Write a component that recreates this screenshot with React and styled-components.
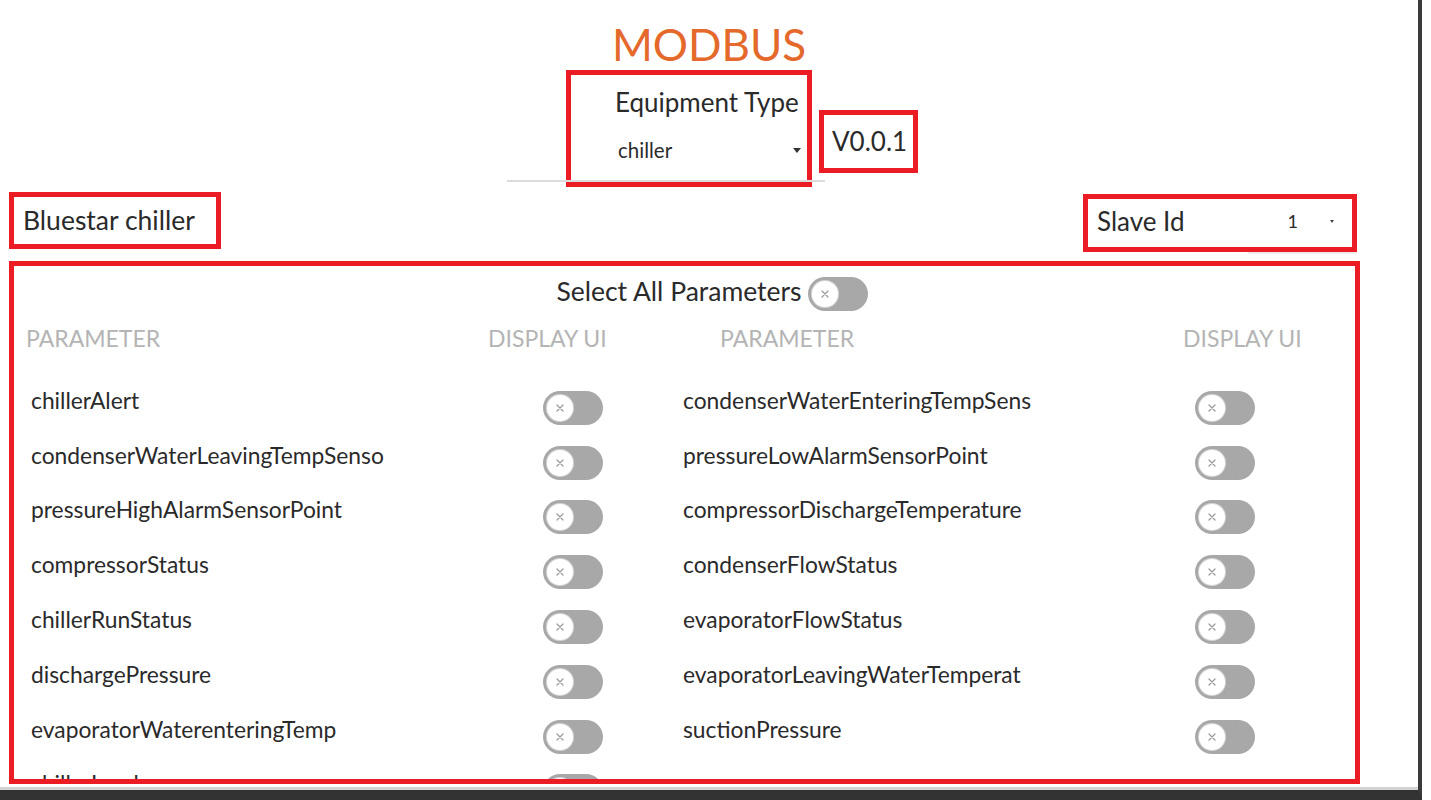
import React from 'react'
import styled, { createGlobalStyle } from 'styled-components'

const RED = '#ec1c24'

const GlobalStyle = createGlobalStyle`
  html, body {
    margin: 0;
    padding: 0;
    background: #fff;
  }
  body {
    font-family: Lato, "Open Sans", sans-serif;
    color: #2a2a2a;
    overflow: hidden;
  }
  * { box-sizing: border-box; }
`

const leftParams = [
  'chillerAlert',
  'condenserWaterLeavingTempSenso',
  'pressureHighAlarmSensorPoint',
  'compressorStatus',
  'chillerRunStatus',
  'dischargePressure',
  'evaporatorWaterenteringTemp',
  'chillerLoad',
]

const rightParams = [
  'condenserWaterEnteringTempSens',
  'pressureLowAlarmSensorPoint',
  'compressorDischargeTemperature',
  'condenserFlowStatus',
  'evaporatorFlowStatus',
  'evaporatorLeavingWaterTemperat',
  'suctionPressure',
]

const Toggle = () => (
  <Track>
    <Thumb>
      <svg width="10" height="10" viewBox="0 0 10 10">
        <path d="M2 2 L8 8 M8 2 L2 8" stroke="#9b9b9b" strokeWidth="1.3" strokeLinecap="round" />
      </svg>
    </Thumb>
  </Track>
)

const App = () => {
  const rows = []
  leftParams.forEach((name, i) => {
    rows.push({ key: 'l' + i, name })
    rows.push({ key: 'r' + i, name: rightParams[i] })
  })

  return (
    <Frame>
      <GlobalStyle />
      <Title>MODBUS</Title>

      <HeaderRow>
        <EquipBox>
          <FieldLabel>Equipment Type</FieldLabel>
          <SelectLine>
            <span>chiller</span>
            <Caret />
          </SelectLine>
        </EquipBox>
        <VersionBox>V0.0.1</VersionBox>
      </HeaderRow>

      <Body>
        <InfoRow>
          <NameBox>Bluestar chiller</NameBox>
          <SlaveBox>
            <span>Slave Id</span>
            <SlaveSelect>
              <span>1</span>
              <SmallCaret />
            </SlaveSelect>
          </SlaveBox>
        </InfoRow>

        <ParamPanel>
          <SelectAllRow>
            <span>Select All Parameters</span>
            <Toggle />
          </SelectAllRow>

          <ColumnHeads>
            <span>PARAMETER</span>
            <span>DISPLAY UI</span>
            <span>PARAMETER</span>
            <span>DISPLAY UI</span>
          </ColumnHeads>

          <ParamGrid>
            {rows.map(row => (
              <ParamItem key={row.key}>
                {row.name && (
                  <>
                    <ParamName>{row.name}</ParamName>
                    <Toggle />
                  </>
                )}
              </ParamItem>
            ))}
          </ParamGrid>
        </ParamPanel>
      </Body>
    </Frame>
  )
}

const Frame = styled.div`
  width: 1422px;
  height: 800px;
  background: #fff;
  border-right: 4px solid #3a3a3a;
  border-bottom: 10px solid #333;
  box-shadow: inset 0 -3px 0 #d2d2d2;
  padding-top: 18px;
  display: flex;
  flex-direction: column;
  overflow: hidden;
`

const Title = styled.h1`
  margin: 0;
  text-align: center;
  font-weight: 400;
  font-size: 44px;
  line-height: 1.2;
  color: #e4692b;
`

const HeaderRow = styled.div`
  display: flex;
  justify-content: center;
  align-items: flex-start;
  padding-left: 66px;
  height: 117px;
  margin-top: -1px;
`

const EquipBox = styled.div`
  position: relative;
  width: 246px;
  height: 117px;
  border: 5px solid ${RED};
  padding: 12px 4px 0 44px;

  &::after {
    content: '';
    position: absolute;
    left: -64px;
    top: 105px;
    width: 318px;
    height: 2px;
    background: #dcdcdc;
  }
`

const FieldLabel = styled.div`
  font-size: 26px;
  line-height: 1.2;
  white-space: nowrap;
`

const SelectLine = styled.div`
  margin-top: 20px;
  padding-left: 3px;
  display: flex;
  justify-content: space-between;
  align-items: center;
  font-size: 20.5px;
  line-height: 1.2;
`

const Caret = styled.span`
  width: 0;
  height: 0;
  margin-right: 2px;
  border-left: 4px solid transparent;
  border-right: 4px solid transparent;
  border-top: 5px solid #333;
`

const VersionBox = styled.div`
  margin-left: 7px;
  margin-top: 40px;
  width: 99px;
  height: 63px;
  border: 5px solid ${RED};
  padding-left: 8px;
  display: flex;
  align-items: center;
  font-size: 26px;
`

const Body = styled.div`
  padding: 0 58px 0 9px;
  display: flex;
  flex-direction: column;
`

const InfoRow = styled.div`
  margin-top: 5px;
  display: flex;
  justify-content: space-between;
  align-items: flex-start;
`

const NameBox = styled.div`
  width: 212px;
  height: 57px;
  border: 5px solid ${RED};
  padding-left: 9px;
  display: flex;
  align-items: center;
  font-size: 26.5px;
  white-space: nowrap;
`

const SlaveBox = styled.div`
  position: relative;
  margin-top: 2px;
  margin-right: 3px;
  width: 274px;
  height: 58px;
  border: 5px solid ${RED};
  padding: 0 18px 3px 9px;
  display: flex;
  align-items: center;
  font-size: 26px;

  &::after {
    content: '';
    position: absolute;
    left: 160px;
    right: -5px;
    bottom: -7px;
    height: 2px;
    background: #ececec;
  }
`

const SlaveSelect = styled.div`
  margin-left: auto;
  display: flex;
  align-items: center;
  gap: 32px;
  font-size: 18px;
`

const SmallCaret = styled.span`
  width: 0;
  height: 0;
  border-left: 2px solid transparent;
  border-right: 2px solid transparent;
  border-top: 3px solid #444;
`

const ParamPanel = styled.div`
  margin-top: 9px;
  height: 523px;
  border: 5px solid ${RED};
  overflow: hidden;
  padding-top: 7px;
`

const SelectAllRow = styled.div`
  display: flex;
  justify-content: center;
  align-items: center;
  gap: 6px;
  padding-left: 55px;
  font-size: 26.5px;
  line-height: 1.2;
`

const ColumnHeads = styled.div`
  margin-top: 14px;
  padding-left: 12px;
  display: grid;
  grid-template-columns: 462px 232px 463px auto;
  font-size: 23px;
  line-height: 1.2;
  color: #b4b4b4;
`

const ParamGrid = styled.div`
  margin-top: 34.5px;
  padding-left: 17px;
  display: grid;
  grid-template-columns: 652px 652px;
  grid-auto-rows: 54.8px;
`

const ParamItem = styled.div`
  display: flex;
  align-items: flex-start;
`

const ParamName = styled.div`
  width: 512px;
  font-size: 22.8px;
  line-height: 1.2;
  white-space: nowrap;
`

const Track = styled.div`
  flex: none;
  margin-top: 4px;
  width: 60px;
  height: 34px;
  border-radius: 17px;
  background: #a8a8a8;
  padding: 4px;
  display: flex;
  align-items: center;
`

const Thumb = styled.div`
  width: 26px;
  height: 26px;
  border-radius: 50%;
  background: #fff;
  box-shadow: 0 0 0 1px #d6d6d6;
  display: flex;
  align-items: center;
  justify-content: center;
`

export default App
